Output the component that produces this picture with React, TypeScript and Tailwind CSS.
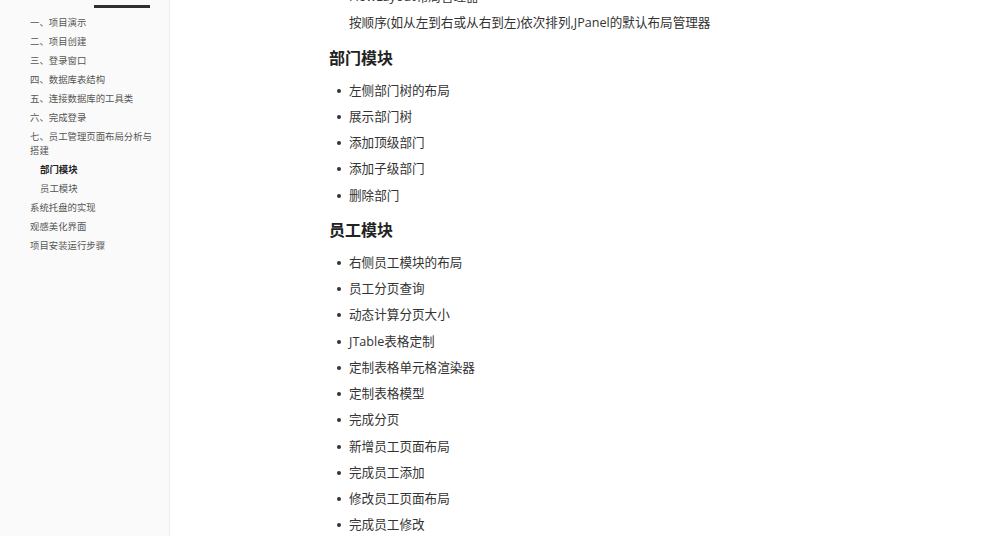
import React from "react";

const font = '"Open Sans", "Noto Sans CJK SC", sans-serif';

type NavItem = { label: string; sub?: boolean; active?: boolean };

const navItems: NavItem[] = [
  { label: "一、项目演示" },
  { label: "二、项目创建" },
  { label: "三、登录窗口" },
  { label: "四、数据库表结构" },
  { label: "五、连接数据库的工具类" },
  { label: "六、完成登录" },
  { label: "七、员工管理页面布局分析与搭建" },
  { label: "部门模块", sub: true, active: true },
  { label: "员工模块", sub: true },
  { label: "系统托盘的实现" },
  { label: "观感美化界面" },
  { label: "项目安装运行步骤" },
];

const deptItems = ["左侧部门树的布局", "展示部门树", "添加顶级部门", "添加子级部门", "删除部门"];

const empItems = [
  "右侧员工模块的布局",
  "员工分页查询",
  "动态计算分页大小",
  "JTable表格定制",
  "定制表格单元格渲染器",
  "定制表格模型",
  "完成分页",
  "新增员工页面布局",
  "完成员工添加",
  "修改员工页面布局",
  "完成员工修改",
];

const Bullet = ({ text }: { text: string }) => (
  <li className="flex items-center h-[26.25px] leading-[26.25px]">
    <span className="w-[4px] h-[4px] rounded-full bg-[#333] ml-[8px] mr-[8px] shrink-0" />
    <span>{text}</span>
  </li>
);

const Sidebar = () => (
  <aside className="w-[170px] shrink-0 h-full bg-[#fafafa] border-r border-[#ececec] relative">
    <div className="pl-[94px] pt-[5px]">
      <div className="w-[56px] h-[3px] bg-[#2f2f2f]" />
    </div>
    <ul className="flex flex-col gap-[5.5px] pl-[30px] pr-[14px] pt-[8.3px] text-[9.4px] leading-[13.5px] text-[#555]">
      {navItems.map((item) => (
        <li
          key={item.label}
          className={
            (item.sub ? "pl-[10px] " : "") +
            (item.active ? "font-bold text-[#222]" : "")
          }
        >
          {item.label}
        </li>
      ))}
    </ul>
  </aside>
);

export default function App() {
  return (
    <div
      className="flex w-[1000px] h-[536px] overflow-hidden bg-white"
      style={{ fontFamily: font }}
    >
      <Sidebar />
      <main className="flex-1 pl-[159px] -mt-[16px] text-[12.6px] text-[#333]">
        <div className="pl-[20px] leading-[26.25px]">
          <p>FlowLayout布局管理器</p>
          <p>按顺序(如从左到右或从右到左)依次排列,JPanel的默认布局管理器</p>
        </div>
        <h3 className="mt-[9px] text-[16px] leading-[24px] font-bold text-[#222]">部门模块</h3>
        <ul className="mt-[8px]">
          {deptItems.map((t) => (
            <Bullet key={t} text={t} />
          ))}
        </ul>
        <h3 className="mt-[9px] text-[16px] leading-[24px] font-bold text-[#222]">员工模块</h3>
        <ul className="mt-[8px]">
          {empItems.map((t) => (
            <Bullet key={t} text={t} />
          ))}
        </ul>
      </main>
    </div>
  );
}
